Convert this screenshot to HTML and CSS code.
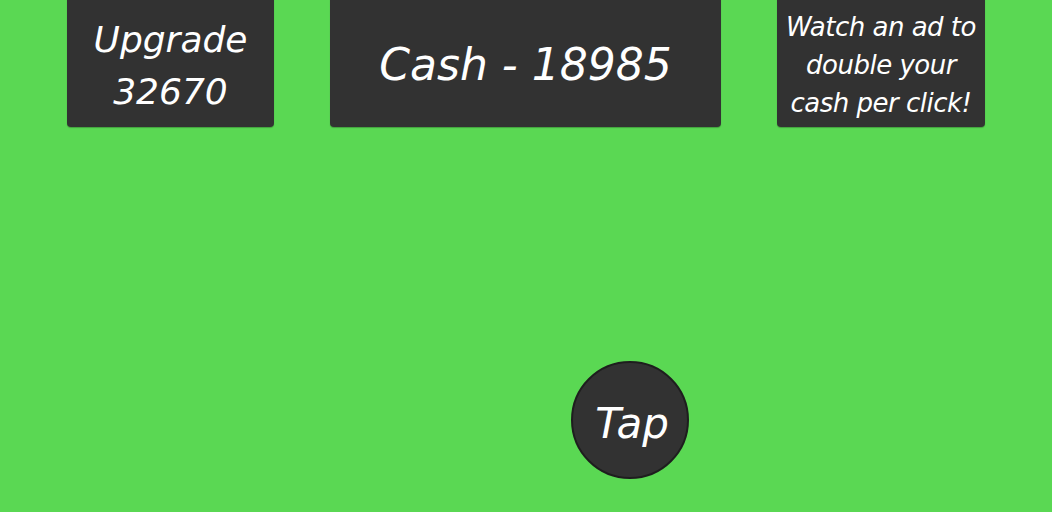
FILE: index.html
```html
<!DOCTYPE html>
<html>
<head>
<meta charset="utf-8">
<link rel="stylesheet" href="styles.css">
</head>
<body>
<div class="screen">
  <div class="top-row">
    <div class="panel panel-upgrade"><span>Upgrade<br>32670</span></div>
    <div class="panel panel-cash"><span>Cash - 18985</span></div>
    <div class="panel panel-ad"><span>Watch an ad to<br>double your<br>cash per click!</span></div>
  </div>
  <div class="tap-area">
    <div class="tap">Tap</div>
  </div>
</div>
</body>
</html>
```
FILE: styles.css
```css
html, body {
  margin: 0;
  padding: 0;
}
body {
  background: #5ad853;
  width: 1052px;
  height: 512px;
  overflow: hidden;
  font-family: "Comic Sans MS", "DejaVu Sans", sans-serif;
  font-style: italic;
  color: #ffffff;
}
.screen {
  display: flex;
  flex-direction: column;
}
.top-row {
  display: flex;
  gap: 56px;
  padding-left: 67px;
  margin-top: -4px;
}
.panel {
  background: #323232;
  border-radius: 4px;
  height: 131px;
  display: flex;
  align-items: center;
  justify-content: center;
  text-align: center;
  box-shadow: 0 1px 1px rgba(0,0,0,0.25);
}
.panel span { display: block; }
.panel-upgrade {
  width: 207px;
  font-size: 36px;
  line-height: 52px;
}
.panel-upgrade span { padding-top: 8px; }
.panel-cash {
  width: 391px;
  font-size: 44px;
}
.panel-cash span { padding-top: 6px; }
.panel-ad {
  width: 208px;
  font-size: 26px;
  line-height: 38px;
  letter-spacing: -0.5px;
}
.panel-ad span { padding-top: 6px; }
.tap-area {
  display: flex;
  padding-left: 571px;
  margin-top: 234px;
}
.tap {
  width: 114px;
  border-radius: 50%;
  background: #323232;
  border: 2px solid #1e1e1e;
  display: flex;
  align-items: center;
  justify-content: center;
  font-size: 42px;
  padding-top: 6px;
  padding-left: 4px;
  width: 110px;
  box-sizing: content-box;
  height: 108px;
}
```
